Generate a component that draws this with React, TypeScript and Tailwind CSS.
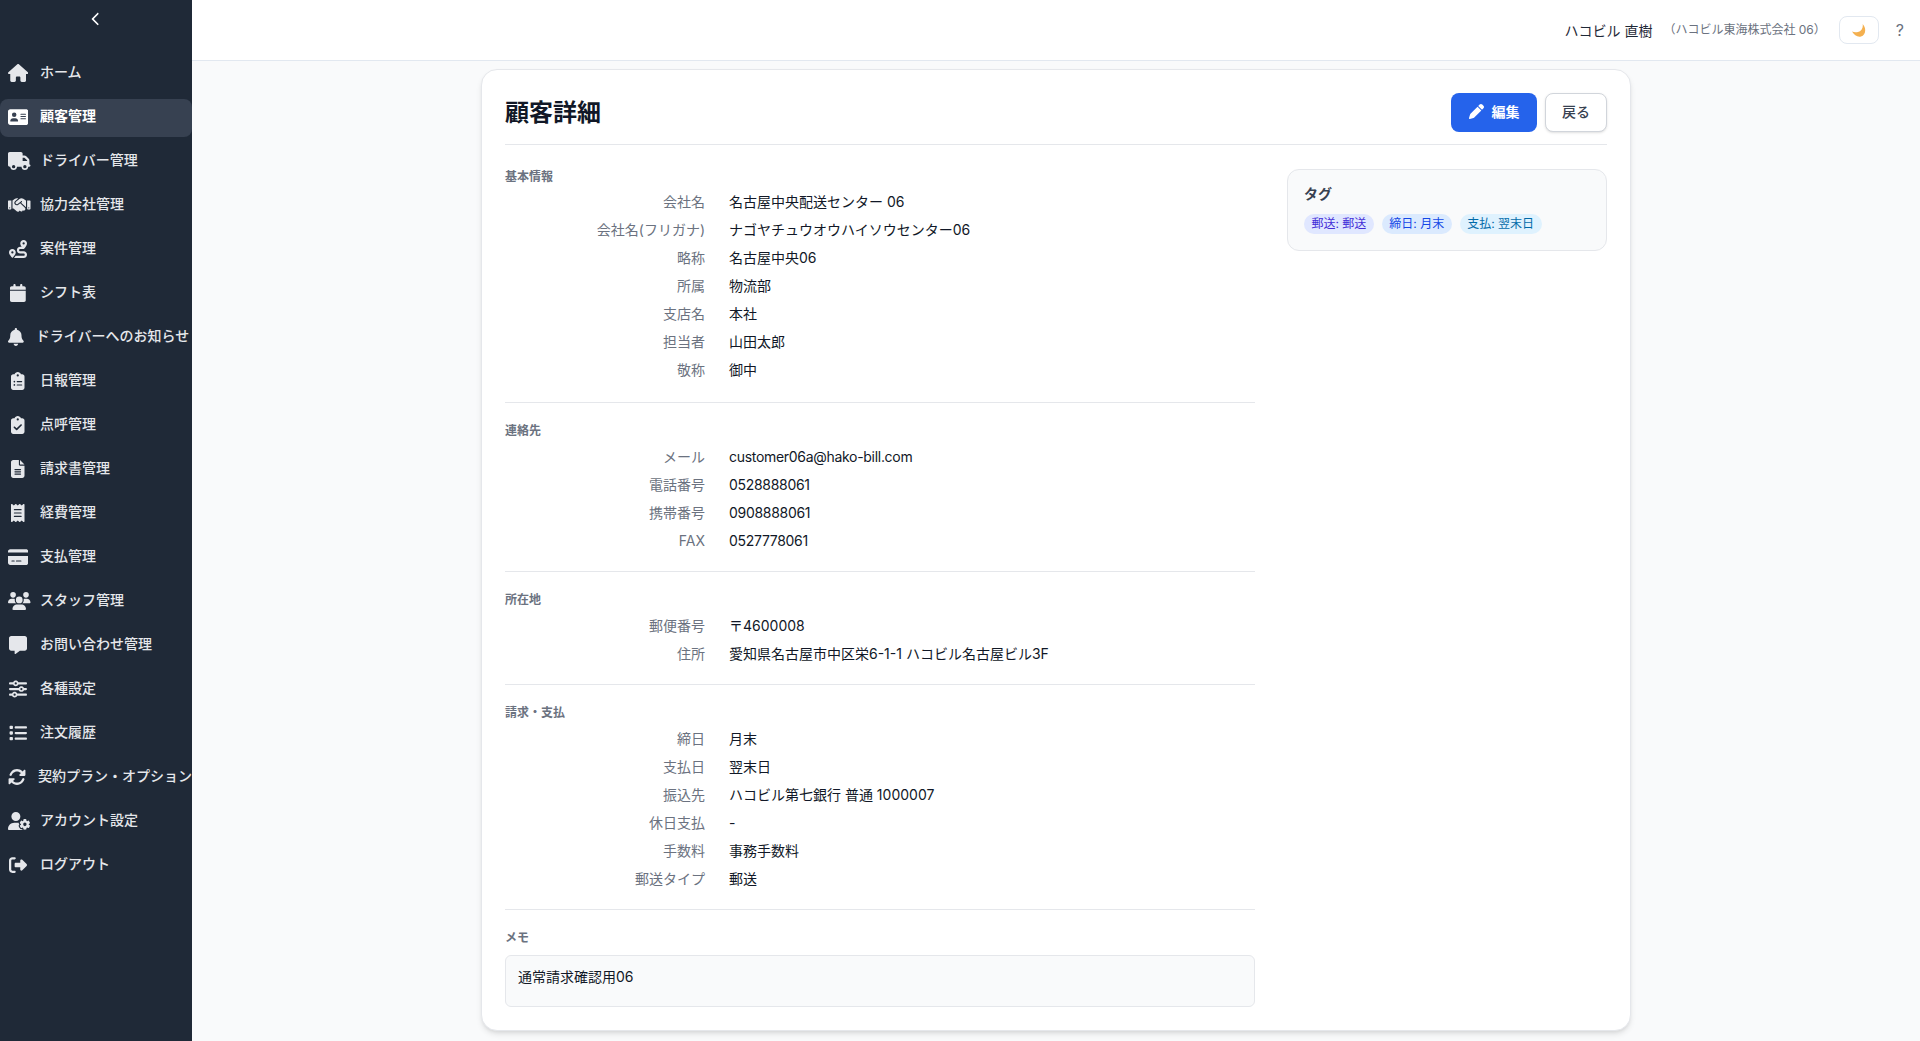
import {
  FaAddressCard,
  FaBell,
  FaCalendar,
  FaChevronLeft,
  FaClipboardCheck,
  FaClipboardList,
  FaCreditCard,
  FaFileLines,
  FaHandshake,
  FaHouse,
  FaList,
  FaMessage,
  FaPen,
  FaReceipt,
  FaRightFromBracket,
  FaRotate,
  FaRoute,
  FaSliders,
  FaTruck,
  FaUserGear,
  FaUsers,
} from "react-icons/fa6";

const navItems = [
  { label: "ホーム", icon: FaHouse, w: "w-[20.25px]" },
  { label: "顧客管理", icon: FaAddressCard, w: "w-[20.25px]", active: true },
  { label: "ドライバー管理", icon: FaTruck, w: "w-[22.5px]" },
  { label: "協力会社管理", icon: FaHandshake, w: "w-[22.5px]" },
  { label: "案件管理", icon: FaRoute, w: "w-[18px]" },
  { label: "シフト表", icon: FaCalendar, w: "w-[15.75px]" },
  { label: "ドライバーへのお知らせ", icon: FaBell, w: "w-[15.75px]" },
  { label: "日報管理", icon: FaClipboardList, w: "w-[13.5px]" },
  { label: "点呼管理", icon: FaClipboardCheck, w: "w-[13.5px]" },
  { label: "請求書管理", icon: FaFileLines, w: "w-[13.5px]" },
  { label: "経費管理", icon: FaReceipt, w: "w-[13.5px]" },
  { label: "支払管理", icon: FaCreditCard, w: "w-[20.25px]" },
  { label: "スタッフ管理", icon: FaUsers, w: "w-[22.5px]" },
  { label: "お問い合わせ管理", icon: FaMessage, w: "w-[18px]" },
  { label: "各種設定", icon: FaSliders, w: "w-[18px]" },
  { label: "注文履歴", icon: FaList, w: "w-[18px]" },
  { label: "契約プラン・オプション", icon: FaRotate, w: "w-[18px]" },
  { label: "アカウント設定", icon: FaUserGear, w: "w-[22.5px]" },
  { label: "ログアウト", icon: FaRightFromBracket, w: "w-[18px]" },
];

const sections = [
  {
    title: "基本情報",
    rows: [
      ["会社名", "名古屋中央配送センター 06"],
      ["会社名(フリガナ)", "ナゴヤチュウオウハイソウセンター06"],
      ["略称", "名古屋中央06"],
      ["所属", "物流部"],
      ["支店名", "本社"],
      ["担当者", "山田太郎"],
      ["敬称", "御中"],
    ],
  },
  {
    title: "連絡先",
    rows: [
      ["メール", "customer06a@hako-bill.com"],
      ["電話番号", "0528888061"],
      ["携帯番号", "0908888061"],
      ["FAX", "0527778061"],
    ],
  },
  {
    title: "所在地",
    rows: [
      ["郵便番号", "〒4600008"],
      ["住所", "愛知県名古屋市中区栄6-1-1 ハコビル名古屋ビル3F"],
    ],
  },
  {
    title: "請求・支払",
    rows: [
      ["締日", "月末"],
      ["支払日", "翌末日"],
      ["振込先", "ハコビル第七銀行 普通 1000007"],
      ["休日支払", "-"],
      ["手数料", "事務手数料"],
      ["郵送タイプ", "郵送"],
    ],
  },
];

const tags = [
  { label: "郵送: 郵送", className: "bg-indigo-100 text-indigo-700" },
  { label: "締日: 月末", className: "bg-blue-100 text-blue-700" },
  { label: "支払: 翌末日", className: "bg-sky-100 text-sky-700" },
];

function Sidebar() {
  return (
    <aside className="w-[192px] shrink-0 bg-[#1f2937] text-[#e5e7eb]">
      <div className="flex h-[55px] justify-center pt-[12px] text-[14px] text-white">
        <FaChevronLeft className="h-[14px] w-[14px]" />
      </div>
      <nav className="flex flex-col gap-[6px]">
        {navItems.map((item) => {
          const Icon = item.icon;
          return (
            <div
              key={item.label}
              className={
                item.active
                  ? "flex h-[38px] items-center rounded-lg bg-[#374151] px-2 text-[14px] font-semibold text-white"
                  : "flex h-[38px] items-center rounded-lg px-2 text-[14px] font-medium"
              }
            >
              <span className="mb-[2px] w-5">
                <Icon className={`mx-auto block h-[18px] ${item.w}`} />
              </span>
              <span className="mb-[6px] ml-3 whitespace-nowrap">{item.label}</span>
            </div>
          );
        })}
      </nav>
    </aside>
  );
}

function Header() {
  return (
    <header className="flex h-[61px] items-center justify-end border-b border-[#e2e8f0] bg-white pr-[16px]">
      <span className="text-[14px] text-[#1f2937]">ハコビル 直樹</span>
      <span className="ml-[11px] text-[12px] text-[#6b7280]">（ハコビル東海株式会社 06）</span>
      <button className="ml-[13px] flex h-[28px] w-[40px] items-center justify-center rounded-lg border border-[#e2e8f0] bg-white">
        <svg viewBox="0 0 14 13" className="h-[13px] w-[14px]">
          <path d="M10.600 0C11.500 3.500 9.500 7 6 8 4 8.500 2 8.400 0 7.600 2 11 5.500 13.400 9 12.500 13.400 11.200 15 4.500 10.600 0z" fill="#f4b04f" />
        </svg>
      </button>
      <span className="ml-[17px] text-[16px] text-[#6b7280]">?</span>
    </header>
  );
}

function InfoSection({ title, rows }: { title: string; rows: string[][] }) {
  return (
    <section className="group border-b border-[#e5e7eb] pb-[20px] pt-[20px] first:pb-[22px] first:pt-0">
      <h3 className="mb-[8px] text-[12px] font-semibold leading-4 text-[#6b7280] group-first:mb-[7px]">{title}</h3>
      <dl className="flex flex-col gap-[8px]">
        {rows.map(([label, value]) => (
          <div key={label} className="grid grid-cols-[200px_1fr] gap-[24px] text-[14px] leading-5">
            <dt className="text-right text-[#6b7280]">{label}</dt>
            {/* latin-only values run a bit tight in the reference */}
            <dd className={/^[\x00-\x7f]+$/.test(value) ? "tracking-[-0.3px] text-[#111827]" : "text-[#111827]"}>{value}</dd>
          </div>
        ))}
      </dl>
    </section>
  );
}

export default function App() {
  return (
    <div
      className="flex h-[1041px] overflow-hidden bg-[#f9fafb]"
      style={{ fontFamily: 'Inter, "Noto Sans CJK JP", sans-serif' }}
    >
      <Sidebar />
      <div className="flex min-w-0 flex-1 flex-col">
        <Header />
        <main className="flex justify-center pt-[8px]">
          <div className="w-[1150px] rounded-2xl border border-[#e5e7eb] bg-white px-[23px] pb-[23px] pt-[23px] shadow-md">
            <div className="mb-[24px] flex items-center justify-between border-b border-[#e5e7eb] pb-[12px]">
              <h1 className="text-[24px] font-bold text-[#111827]">顧客詳細</h1>
              <div className="flex gap-[8px]">
                <button className="flex h-[39px] w-[86px] items-center justify-center gap-[8px] rounded-lg bg-[#2563eb] pb-[2px] text-[14px] font-semibold text-white">
                  <FaPen className="h-[15px] w-[15px]" />
                  編集
                </button>
                <button className="h-[39px] w-[62px] rounded-lg border border-[#d1d5db] bg-white pb-[2px] text-[14px] font-medium text-[#374151] shadow-sm">
                  戻る
                </button>
              </div>
            </div>
            <div className="grid grid-cols-[750px_320px] gap-[32px]">
              <div>
                {sections.map((s) => (
                  <InfoSection key={s.title} title={s.title} rows={s.rows} />
                ))}
                <div className="pt-[20px]">
                  <h3 className="mb-[9px] text-[12px] font-semibold leading-4 text-[#6b7280]">メモ</h3>
                  <div className="h-[52px] rounded-md border border-[#e5e7eb] bg-[#f9fafb] px-[12px] pt-[11px] text-[14px] leading-5 text-[#111827]">
                    通常請求確認用06
                  </div>
                </div>
              </div>
              <div>
                <div className="rounded-xl border border-[#e5e7eb] bg-[#f9fafb] p-[16px] pt-[14px]">
                  <h3 className="mb-[10px] text-[14px] font-semibold leading-5 text-[#374151]">タグ</h3>
                  <div className="flex gap-[8px]">
                    {tags.map((t) => (
                      <span key={t.label} className={`rounded-full px-[7.5px] text-[12px] leading-[20px] ${t.className}`}>
                        {t.label}
                      </span>
                    ))}
                  </div>
                </div>
              </div>
            </div>
          </div>
        </main>
      </div>
    </div>
  );
}
